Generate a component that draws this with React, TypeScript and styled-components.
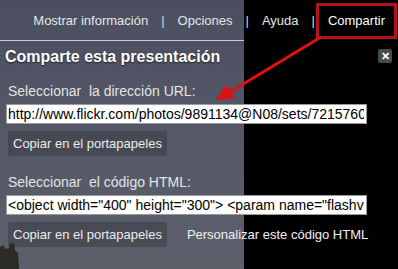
import { createGlobalStyle, styled } from "styled-components";

const Global = createGlobalStyle`
  html, body { margin: 0; padding: 0; background: #000; }
  body { font-family: "Liberation Sans", Arial, sans-serif; }
`;

const Stage = styled.div`
  position: relative;
  width: 398px;
  height: 269px;
  overflow: hidden;
  background:
    linear-gradient(#c9cdd8, #c9cdd8) 0 40px / 244px 1px no-repeat,
    linear-gradient(to right, transparent 244px, #000 244px),
    linear-gradient(#4a4e60 0%, #545867 50%, #5d606b 100%);
  color: #ececec;
`;

const Nav = styled.nav`
  display: flex;
  justify-content: flex-end;
  align-items: center;
  height: 41px;
  padding-right: 1px;
  box-sizing: border-box;
  font-size: 13px;
`;

const NavItem = styled.span<{ $active?: boolean }>`
  padding: 7px 9px 8px;
  border: 3px solid ${(p) => (p.$active ? "#b5121b" : "transparent")};
  color: ${(p) => (p.$active ? "#fff" : "#e6e6e6")};
`;

const Pipe = styled.span`
  color: #d8d8d8;
  padding: 0 1px;
`;

const Panel = styled.section`
  padding: 4px 6px 0 5px;
`;

const TitleRow = styled.div`
  display: flex;
  justify-content: space-between;
  align-items: center;
  height: 22px;
`;

const Title = styled.h2`
  margin: 2px 0 0;
  font-size: 16px;
  font-weight: bold;
  color: #fff;
  text-shadow: 0 1px 2px rgba(0, 0, 0, 0.6);
`;

const Close = styled.button`
  width: 14px;
  height: 14px;
  padding: 0;
  border: 0;
  border-radius: 2px;
  background: #4a4a4a;
  color: #fff;
  display: grid;
  place-items: center;
  font: bold 11px "Liberation Sans", Arial, sans-serif;
  line-height: 1;
`;

const Label = styled.div<{ $gap: number }>`
  margin: ${(p) => p.$gap}px 0 0 3px;
  font-size: 14px;
  line-height: 17px;
  color: #e4e4e4;
  white-space: pre;
`;

const Field = styled.input`
  display: block;
  box-sizing: border-box;
  width: 361px;
  height: 20px;
  margin: 4px 0 0 1px;
  padding: 0 2px 0 1px;
  border: 1px solid #9a9a9a;
  background: #fff;
  color: #000;
  font: 14px "Liberation Sans", Arial, sans-serif;
  outline: none;
`;

const ActionRow = styled.div`
  display: flex;
  align-items: center;
  gap: 20px;
  margin-top: 7px;
`;

const CopyButton = styled.button`
  margin-left: 3px;
  height: 25px;
  padding: 0 5px 0 5px;
  border: 0;
  border-radius: 2px;
  background: rgba(58, 60, 68, 0.55);
  color: #ececec;
  font: 13px "Liberation Sans", Arial, sans-serif;
`;

const TextLink = styled.span`
  font-size: 13px;
  color: #f0f0f0;
`;

const Overlay = styled.svg`
  position: absolute;
  left: 0;
  top: 0;
  pointer-events: none;
`;

const Silhouette = styled.svg`
  position: absolute;
  left: 0;
  bottom: 0;
`;

export default function App() {
  return (
    <Stage>
      <Global />
      <Nav>
        <NavItem>Mostrar información</NavItem>
        <Pipe>|</Pipe>
        <NavItem>Opciones</NavItem>
        <Pipe>|</Pipe>
        <NavItem>Ayuda</NavItem>
        <Pipe>|</Pipe>
        <NavItem $active>Compartir</NavItem>
      </Nav>
      <Panel>
        <TitleRow>
          <Title>Comparte esta presentación</Title>
          <Close>✕</Close>
        </TitleRow>
        <Label $gap={16}>Seleccionar  la dirección URL:</Label>
        <Field readOnly value="http://www.flickr.com/photos/9891134@N08/sets/72157600000000000/show/" />
        <ActionRow>
          <CopyButton>Copiar en el portapapeles</CopyButton>
        </ActionRow>
        <Label $gap={18}>Seleccionar  el código HTML:</Label>
        <Field readOnly value={'<object width="400" height="300"> <param name="flashvars" value="">'} />
        <ActionRow>
          <CopyButton>Copiar en el portapapeles</CopyButton>
          <TextLink>Personalizar este código HTML</TextLink>
        </ActionRow>
      </Panel>
      <Silhouette width="24" height="28" viewBox="0 0 24 28">
        <path d="M0 6 L4 4 L5 8 L9 7 L10 2 L14 3 L15 9 L18 12 L19 28 L0 28 Z" fill="#2b2a24" />
      </Silhouette>
      <Overlay width="398" height="269" viewBox="0 0 398 269">
        <line x1="321" y1="37" x2="230" y2="92" stroke="#e01010" strokeWidth="3" />
        <polygon points="216,100 226,85 235,98" fill="#e01010" />
      </Overlay>
    </Stage>
  );
}
